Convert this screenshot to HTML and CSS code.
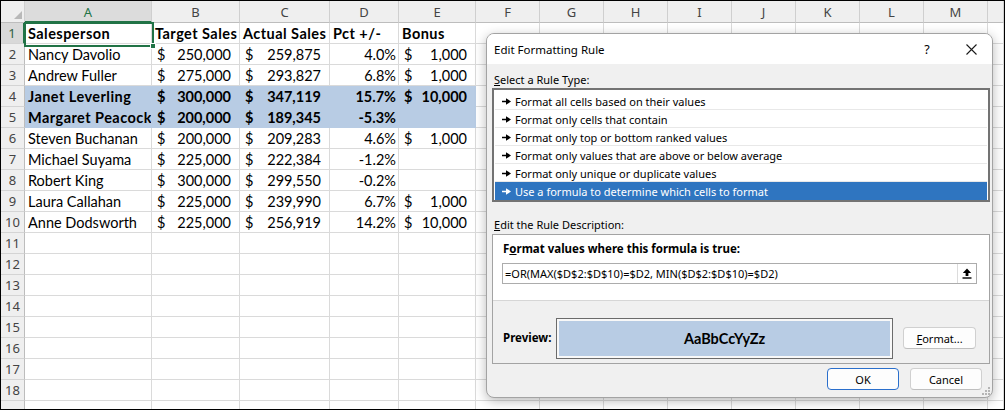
FILE: index.html
```html
<!DOCTYPE html>
<html>
<head>
<meta charset="utf-8">
<title>Edit Formatting Rule</title>
<link rel="stylesheet" href="styles.css">
</head>
<body>
<div class="frame">
  <div class="sheet">
    <div class="row head">
      <div class="corner"><span class="tri"></span></div>
      <div class="sel">A</div><div>B</div><div>C</div><div>D</div><div>E</div>
      <div>F</div><div>G</div><div>H</div><div>I</div><div>J</div><div>K</div><div>L</div><div>M</div><div></div>
    </div>
    <div class="row b">
      <div class="rh selr">1</div>
      <div class="nm">Salesperson</div><div class="nm">Target Sales</div><div class="nm">Actual Sales</div><div class="nm">Pct +/-</div><div class="nm">Bonus</div>
      <div></div><div></div><div></div><div></div><div></div><div></div><div></div><div></div><div></div>
    </div>
    <div class="row">
      <div class="rh">2</div>
      <div>Nancy Davolio</div>
      <div class="acc"><span>$</span><span>250,000</span></div>
      <div class="acc"><span>$</span><span>259,875</span></div>
      <div class="pct">4.0%</div>
      <div class="acc"><span>$</span><span>1,000</span></div>
      <div></div><div></div><div></div><div></div><div></div><div></div><div></div><div></div><div></div>
    </div>
    <div class="row">
      <div class="rh">3</div>
      <div>Andrew Fuller</div>
      <div class="acc"><span>$</span><span>275,000</span></div>
      <div class="acc"><span>$</span><span>293,827</span></div>
      <div class="pct">6.8%</div>
      <div class="acc"><span>$</span><span>1,000</span></div>
      <div></div><div></div><div></div><div></div><div></div><div></div><div></div><div></div><div></div>
    </div>
    <div class="row b">
      <div class="rh">4</div>
      <div class="hl nm">Janet Leverling</div>
      <div class="hl acc"><span>$</span><span>300,000</span></div>
      <div class="hl acc"><span>$</span><span>347,119</span></div>
      <div class="hl pct">15.7%</div>
      <div class="hl acc"><span>$</span><span>10,000</span></div>
      <div></div><div></div><div></div><div></div><div></div><div></div><div></div><div></div><div></div>
    </div>
    <div class="row b">
      <div class="rh">5</div>
      <div class="hl nm">Margaret Peacock</div>
      <div class="hl acc"><span>$</span><span>200,000</span></div>
      <div class="hl acc"><span>$</span><span>189,345</span></div>
      <div class="hl pct">-5.3%</div>
      <div class="hl"></div>
      <div></div><div></div><div></div><div></div><div></div><div></div><div></div><div></div><div></div>
    </div>
    <div class="row">
      <div class="rh">6</div>
      <div>Steven Buchanan</div>
      <div class="acc"><span>$</span><span>200,000</span></div>
      <div class="acc"><span>$</span><span>209,283</span></div>
      <div class="pct">4.6%</div>
      <div class="acc"><span>$</span><span>1,000</span></div>
      <div></div><div></div><div></div><div></div><div></div><div></div><div></div><div></div><div></div>
    </div>
    <div class="row">
      <div class="rh">7</div>
      <div>Michael Suyama</div>
      <div class="acc"><span>$</span><span>225,000</span></div>
      <div class="acc"><span>$</span><span>222,384</span></div>
      <div class="pct">-1.2%</div>
      <div></div>
      <div></div><div></div><div></div><div></div><div></div><div></div><div></div><div></div><div></div>
    </div>
    <div class="row">
      <div class="rh">8</div>
      <div>Robert King</div>
      <div class="acc"><span>$</span><span>300,000</span></div>
      <div class="acc"><span>$</span><span>299,550</span></div>
      <div class="pct">-0.2%</div>
      <div></div>
      <div></div><div></div><div></div><div></div><div></div><div></div><div></div><div></div><div></div>
    </div>
    <div class="row">
      <div class="rh">9</div>
      <div>Laura Callahan</div>
      <div class="acc"><span>$</span><span>225,000</span></div>
      <div class="acc"><span>$</span><span>239,990</span></div>
      <div class="pct">6.7%</div>
      <div class="acc"><span>$</span><span>1,000</span></div>
      <div></div><div></div><div></div><div></div><div></div><div></div><div></div><div></div><div></div>
    </div>
    <div class="row">
      <div class="rh">10</div>
      <div>Anne Dodsworth</div>
      <div class="acc"><span>$</span><span>225,000</span></div>
      <div class="acc"><span>$</span><span>256,919</span></div>
      <div class="pct">14.2%</div>
      <div class="acc"><span>$</span><span>10,000</span></div>
      <div></div><div></div><div></div><div></div><div></div><div></div><div></div><div></div><div></div>
    </div>
    <div class="row"><div class="rh">11</div><div></div><div></div><div></div><div></div><div></div><div></div><div></div><div></div><div></div><div></div><div></div><div></div><div></div><div></div></div>
    <div class="row"><div class="rh">12</div><div></div><div></div><div></div><div></div><div></div><div></div><div></div><div></div><div></div><div></div><div></div><div></div><div></div><div></div></div>
    <div class="row"><div class="rh">13</div><div></div><div></div><div></div><div></div><div></div><div></div><div></div><div></div><div></div><div></div><div></div><div></div><div></div><div></div></div>
    <div class="row"><div class="rh">14</div><div></div><div></div><div></div><div></div><div></div><div></div><div></div><div></div><div></div><div></div><div></div><div></div><div></div><div></div></div>
    <div class="row"><div class="rh">15</div><div></div><div></div><div></div><div></div><div></div><div></div><div></div><div></div><div></div><div></div><div></div><div></div><div></div><div></div></div>
    <div class="row"><div class="rh">16</div><div></div><div></div><div></div><div></div><div></div><div></div><div></div><div></div><div></div><div></div><div></div><div></div><div></div><div></div></div>
    <div class="row"><div class="rh">17</div><div></div><div></div><div></div><div></div><div></div><div></div><div></div><div></div><div></div><div></div><div></div><div></div><div></div><div></div></div>
    <div class="row"><div class="rh">18</div><div></div><div></div><div></div><div></div><div></div><div></div><div></div><div></div><div></div><div></div><div></div><div></div><div></div><div></div></div>
    <div class="row"><div class="rh"></div><div></div><div></div><div></div><div></div><div></div><div></div><div></div><div></div><div></div><div></div><div></div><div></div><div></div><div></div></div>
  </div>

  <div class="selbox"><span class="handle"></span></div>

  <div class="dialog">
    <div class="titlebar">
      <span class="title">Edit Formatting Rule</span>
      <span class="help">?</span>
      <span class="close">
        <svg width="11" height="11" viewBox="0 0 11 11"><path d="M0.5 0.5L10.5 10.5M10.5 0.5L0.5 10.5" stroke="#1a1a1a" stroke-width="1.1" fill="none"/></svg>
      </span>
    </div>
    <div class="body">
      <div class="label"><u>S</u>elect a Rule Type:</div>
      <div class="listbox">
        <div class="item"><svg class="arr" width="9" height="7" viewBox="0 0 9 7"><path d="M0 3.5H5" stroke="currentColor" stroke-width="1.5"/><path d="M4 0.3L9 3.5L4 6.7Z" fill="currentColor"/></svg>Format all cells based on their values</div>
        <div class="item"><svg class="arr" width="9" height="7" viewBox="0 0 9 7"><path d="M0 3.5H5" stroke="currentColor" stroke-width="1.5"/><path d="M4 0.3L9 3.5L4 6.7Z" fill="currentColor"/></svg>Format only cells that contain</div>
        <div class="item"><svg class="arr" width="9" height="7" viewBox="0 0 9 7"><path d="M0 3.5H5" stroke="currentColor" stroke-width="1.5"/><path d="M4 0.3L9 3.5L4 6.7Z" fill="currentColor"/></svg>Format only top or bottom ranked values</div>
        <div class="item"><svg class="arr" width="9" height="7" viewBox="0 0 9 7"><path d="M0 3.5H5" stroke="currentColor" stroke-width="1.5"/><path d="M4 0.3L9 3.5L4 6.7Z" fill="currentColor"/></svg>Format only values that are above or below average</div>
        <div class="item"><svg class="arr" width="9" height="7" viewBox="0 0 9 7"><path d="M0 3.5H5" stroke="currentColor" stroke-width="1.5"/><path d="M4 0.3L9 3.5L4 6.7Z" fill="currentColor"/></svg>Format only unique or duplicate values</div>
        <div class="item active"><svg class="arr" width="9" height="7" viewBox="0 0 9 7"><path d="M0 3.5H5" stroke="currentColor" stroke-width="1.5"/><path d="M4 0.3L9 3.5L4 6.7Z" fill="currentColor"/></svg>Use a formula to determine which cells to format</div>
      </div>
      <div class="label label2"><u>E</u>dit the Rule Description:</div>
      <div class="descbox">
        <div class="desc-top">
          <div class="bold">F<u>o</u>rmat values where this formula is true:</div>
          <div class="formula">
            <span class="ftext">=OR(MAX($D$2:$D$10)=$D2, MIN($D$2:$D$10)=$D2)</span>
            <span class="upbtn"><svg width="10" height="11" viewBox="0 0 10 11"><path d="M5 0.5L0.8 5H3.6V8H6.4V5H9.2Z" fill="#000"/><rect x="0.5" y="9.3" width="9" height="1.4" fill="#000"/></svg></span>
          </div>
        </div>
        <div class="desc-bottom">
          <span class="bold plabel">Preview:</span>
          <div class="preview"><div class="pfill">AaBbCcYyZz</div></div>
          <button class="btn fmt"><u>F</u>ormat...</button>
        </div>
      </div>
      <div class="buttons">
        <button class="btn ok">OK</button>
        <button class="btn">Cancel</button>
      </div>
    </div>
    <svg class="grip" width="8" height="8" viewBox="0 0 8 8"><g fill="#b5b5b5"><rect x="6" y="0" width="2" height="2"/><rect x="3" y="3" width="2" height="2"/><rect x="6" y="3" width="2" height="2"/><rect x="0" y="6" width="2" height="2"/><rect x="3" y="6" width="2" height="2"/><rect x="6" y="6" width="2" height="2"/></g></svg>
  </div>
</div>
</body>
</html>
```

FILE: styles.css
```css
* { box-sizing: border-box; }
html, body { margin: 0; padding: 0; background: #fff; }

.frame {
  position: relative;
  width: 1005px;
  height: 410px;
  border: 1px solid #000;
  overflow: hidden;
  background: #fff;
  font-family: Lato, "Liberation Sans", sans-serif;
}

.sheet { display: flex; flex-direction: column; }

.row {
  display: grid;
  grid-template-columns: 24px 127px 88px 90px 69px 77px repeat(8, 64px) 1fr;
  height: 21px;
  flex: none;
}
.row > div {
  border-right: 1px solid #dadada;
  border-bottom: 1px solid #dadada;
  font-size: 14.5px;
  line-height: 22px;
  white-space: nowrap;
  overflow: hidden;
  padding: 0 3px;
  color: #000;
}
.row.b > div { font-weight: 700; }
.row.b > .nm { letter-spacing: 0.45px; }

.row > .rh {
  background: #efefef;
  border-right-color: #bdbdbd;
  border-bottom-color: #d4d4d4;
  color: #444;
  font-family: "Noto Sans", sans-serif;
  font-weight: 400 !important;
  font-size: 13px;
  line-height: 21px;
  text-align: center;
  padding: 0;
}
.row > .rh.selr {
  background: #d9d9d9;
  color: #2f5f43;
  border-right: 2px solid #217346;
}

.head { height: 22px; }
.head > div {
  background: #efefef;
  border-right-color: #cfcfcf;
  border-bottom-color: #bdbdbd;
  color: #444;
  font-family: "Noto Sans", sans-serif;
  font-size: 13px;
  line-height: 23px;
  text-align: center;
  padding: 0;
}
.head > .sel {
  background: #dcdcdc;
  color: #217346;
  border-bottom: 2px solid #217346;
}
.head > .corner {
  display: flex;
  align-items: flex-end;
  justify-content: flex-end;
  padding: 0 2px 3px 0;
}
.tri {
  width: 8px;
  height: 8px;
  background: #b9b9b9;
  clip-path: polygon(100% 0, 100% 100%, 0 100%);
}

.row > .hl {
  background: #b8cce4;
  border-right-color: #b8cce4;
  border-bottom-color: #b8cce4;
}
.row > .acc {
  display: flex;
  justify-content: space-between;
  padding: 0 8px 0 5px;
}
.row > .pct { text-align: right; padding-right: 2px; }

.selbox {
  position: absolute;
  left: 23px;
  top: 21px;
  width: 130px;
  height: 25px;
  border: 2px solid #217346;
}
.handle {
  position: absolute;
  right: -4px;
  bottom: -4px;
  width: 6px;
  height: 6px;
  background: #217346;
  border: 1px solid #fff;
}

/* dialog */
.dialog {
  position: absolute;
  left: 485px;
  top: 32px;
  width: 507px;
  height: 365px;
  background: #f0f0f0;
  border: 1px solid #a3a3a3;
  border-radius: 8px;
  box-shadow: 0 3px 12px rgba(0, 0, 0, 0.28);
  font-family: "Noto Sans", sans-serif;
  font-size: 11px;
  color: #000;
  display: flex;
  flex-direction: column;
  overflow: hidden;
}
.titlebar {
  height: 30px;
  flex: none;
  background: #fff;
  display: flex;
  align-items: center;
  padding-left: 7px;
  font-size: 11.5px;
}
.titlebar .title { flex: 1; }
.help { width: 46px; text-align: center; font-size: 12.5px; }
.close { width: 42px; display: flex; justify-content: center; }

.body {
  display: flex;
  flex-direction: column;
  padding: 8px 2px 0 5px;
}
.label { height: 16px; line-height: 16px; padding-left: 2px; }
.label2 { margin-top: 15px; margin-bottom: 1px; }

.listbox {
  height: 114px;
  border: 2px solid #737373;
  background: #fff;
  padding: 2px 1px 0 1px;
}
.item {
  height: 18px;
  line-height: 17px;
  border-bottom: 1px solid #e8e8e8;
  display: flex;
  align-items: center;
  padding: 1px 0 0 7px;
  white-space: nowrap;
}
.item .arr { margin-right: 4px; flex: none; }
.item.active { background: #2f75c0; color: #fff; border-bottom-color: #2f75c0; }

.descbox {
  height: 130px;
  border: 1px solid #a3a3a3;
  display: flex;
  flex-direction: column;
}
.desc-top {
  height: 66px;
  flex: none;
  background: #fff;
  border-bottom: 1px solid #d6d6d6;
  padding: 6px 12px 0 9px;
}
.bold { font-weight: 700; line-height: 16px; padding-left: 1px; font-size: 11.5px; }
.formula {
  margin-top: 6px;
  height: 21px;
  border: 1px solid #acacac;
  display: flex;
  align-items: stretch;
  background: #fff;
}
.ftext { flex: 1; line-height: 19px; padding-left: 2px; white-space: nowrap; }
.upbtn {
  width: 19px;
  display: flex;
  align-items: center;
  justify-content: center;
  border-left: 1px solid #dcdcdc;
}

.desc-bottom {
  flex: 1;
  display: flex;
  align-items: center;
  padding: 16px 13px 4px 9px;
}
.plabel { width: 54px; flex: none; }
.preview {
  width: 338px;
  height: 41px;
  border: 1px solid #6b6b6b;
  padding: 2px;
  background: #f8f8f8;
  margin-right: 10px;
}
.pfill {
  height: 100%;
  background: #b8cce4;
  display: flex;
  align-items: center;
  justify-content: center;
  font-family: Lato, sans-serif;
  font-weight: 700;
  font-size: 14.5px;
}

.btn {
  width: 72px;
  height: 22px;
  padding: 0;
  border: 1px solid #d0d0d0;
  border-bottom-color: #bfbfbf;
  border-radius: 4px;
  background: #fdfdfd;
  font-family: "Noto Sans", sans-serif;
  font-size: 11px;
  color: #000;
}
.fmt { width: 73px; height: 22px; }
.buttons {
  display: flex;
  justify-content: flex-end;
  gap: 11px;
  margin-top: 4px;
  padding-right: 8px;
}
.btn.ok { border: 1px solid #2a6fcc; }

.grip { position: absolute; right: 2px; bottom: 2px; }
```
